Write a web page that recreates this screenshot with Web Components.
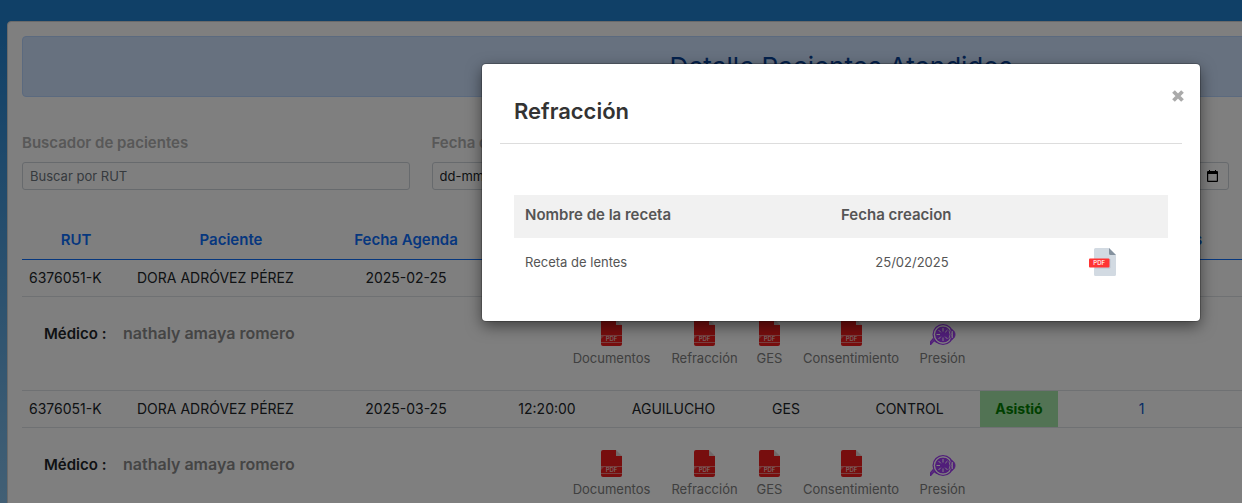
<!DOCTYPE html>
<html lang="es">
<head>
<meta charset="utf-8">
<title>Detalle Pacientes Atendidos</title>
<style>
/* Scrolling is locked while the modal is open. */
body { margin: 0; height: 100vh; overflow: hidden; font-family: Inter, "Noto Sans", sans-serif; font-size: 14px; line-height: 22px; color: #212529; }
</style>
</head>
<body>
<clinic-page>
  <page-banner>Detalle Pacientes Atendidos</page-banner>
  <filter-bar>
    <filter-field label="Buscador de pacientes" placeholder="Buscar por RUT"></filter-field>
    <filter-field label="Fecha desde" placeholder="dd-mm-aaaa" date></filter-field>
    <filter-field label="Fecha hasta" placeholder="dd-mm-aaaa" date></filter-field>
  </filter-bar>
  <agenda-table></agenda-table>
  <modal-window slot="overlay" heading="Refracción">
    <recipe-table></recipe-table>
  </modal-window>
</clinic-page>

<script>
class BaseElement extends HTMLElement {
  connectedCallback() {
    if (this.shadowRoot) return;
    this.attachShadow({ mode: 'open' }).innerHTML =
      '<style>*{box-sizing:border-box}' + this.css() + '</style>' + this.html();
  }
  attr(name) { return this.getAttribute(name) || ''; }
}

/* Page: blue gradient, white card, and the overlay above both. The card is wider than the window. */
customElements.define('clinic-page', class extends BaseElement {
  css() { return `
    :host { display: block; position: relative; width: calc(100% + 440px); min-height: 100vh; padding: 21px 7px; box-sizing: border-box;
      background: linear-gradient(#2080ce 0, #2080ce 20px, #8cc4ec 540px); }
    main { background: #fff; border: 1px solid #d4d4d4; border-radius: 4px; padding: 14px; }`; }
  html() { return '<main><slot></slot></main><slot name="overlay"></slot>'; }
});

customElements.define('page-banner', class extends BaseElement {
  css() { return `
    :host { display: block; }
    h1 { margin: 0; padding: 14px; border: 1px solid #b6d4fe; border-radius: 4px; background: #cfe2ff; color: #084298;
      font-size: 26px; line-height: 31px; font-weight: 400; text-align: center; }`; }
  html() { return '<h1><slot></slot></h1>'; }
});

customElements.define('filter-bar', class extends BaseElement {
  css() { return ':host { display: grid; grid-template-columns: repeat(4, 1fr); margin: 35px 0 32px; }'; }
  html() { return '<slot></slot>'; }
});

customElements.define('filter-field', class extends BaseElement {
  css() { return `
    :host { display: block; padding-right: 22px; }
    label { display: block; margin-bottom: 8px; font-size: 15px; font-weight: 600; color: #b0b0b0; }
    .box { display: flex; align-items: center; height: 28px; padding: 0 10px 0 7px; border: 1px solid #ced4da; border-radius: 3px; background: #fff; }
    input { flex: 1; min-width: 0; padding: 0; border: 0; background: none; font: inherit; font-size: 13px; outline: 0; }
    input::placeholder { color: #6c757d; opacity: 1; }
    :host([date]) input::placeholder { color: #212529; }
    svg { flex: none; }`; }
  html() {
    const icon = this.hasAttribute('date')
      ? '<svg width="11" height="12" viewBox="0 0 11 12" aria-hidden="true"><path d="M2 0h1v1h5V0h1v1h1a1 1 0 0 1 1 1v9a1 1 0 0 1-1 1H1a1 1 0 0 1-1-1V2a1 1 0 0 1 1-1h1zM1.200 4v6.800h8.600V4z" fill="#000" fill-rule="evenodd"/></svg>' : '';
    return `<label for="f">${this.attr('label')}</label><div class="box"><input id="f" type="text" placeholder="${this.attr('placeholder')}">${icon}</div>`;
  }
});

/* One document shortcut of a visit: icon over caption. */
customElements.define('doc-action', class extends BaseElement {
  css() { return `
    :host { display: block; }
    a { display: flex; flex-direction: column; align-items: center; color: #808080; font-size: 13px; line-height: 20px; text-decoration: none; white-space: nowrap; }
    svg { display: block; margin-bottom: 2px; }
    svg text { font: 500 6px Inter, sans-serif; }`; }
  html() {
    const pdf = `<svg width="21" height="27" viewBox="0 0 21 27" aria-hidden="true">
      <path d="M2 0H15V6H21V25a2 2 0 0 1-2 2H2a2 2 0 0 1-2-2V2A2 2 0 0 1 2 0Z" fill="#ee1c1c"/>
      <path d="M15 0l6 6h-6z" fill="#e4d4d4"/><path d="M0 16.500H21M0 23.500H21" stroke="#f29a9a" stroke-width=".8"/>
      <path d="M0 17h3L0 20z" fill="#f06a6a"/><text x="10.500" y="22.200" text-anchor="middle" fill="#f4dede">PDF</text></svg>`;
    const eye = `<svg width="26" height="27" viewBox="0 0 26 27" aria-hidden="true">
      <circle cx="13" cy="15.500" r="8" fill="#a33df5"/>
      <g fill="none" stroke="#a33df5"><circle cx="13" cy="15.500" r="9.900" stroke-width="1.300"/>
      <path d="M20.500 10c3.500 1 4.500 3.500 4.500 5.500s-1 4.500-4.500 5.500z" fill="#a33df5" stroke-width="1"/>
      <path d="M3.500 19.500L.5 23v3M7 23.500l-3-2-3.500 4" stroke-width="1.500"/></g>
      <g fill="none" stroke="#fff" stroke-width="1"><circle cx="13" cy="15.500" r="8.700" stroke-width=".6"/>
      <path d="M13 9v3.500M13 18.500V22M6.500 15.500H10M8.500 11l2.300 2.300M8.500 20l2.300-2.300M17.500 11l-2.300 2.300M17.500 20l-2.300-2.300"/>
      <path d="M19 11.500q2 4 0 8M22.500 12v7" stroke-width=".8"/></g></svg>`;
    return `<a href="#">${this.hasAttribute('eye') ? eye : pdf}<slot></slot></a>`;
  }
});

customElements.define('visit-detail', class extends BaseElement {
  css() { return `
    :host { display: flex; height: 93px; padding: 22px 22px 0; font-weight: 600; box-sizing: border-box; }
    .doctor { display: flex; align-items: baseline; align-self: flex-start; gap: 18px; width: 527px; padding-top: 3px; }
    .doctor b { font-size: 15px; font-weight: 600; color: #212529; width: 61px; white-space: nowrap; }
    .doctor span { font-size: 16px; color: #8a8a8a; }
    .docs { display: grid; grid-template-columns: 81px 67px 25px 100px 45px; gap: 19px; font-weight: 400; }`; }
  html() { return `<div class="doctor"><b>Médico :</b><span>${this.attr('doctor')}</span></div>
    <div class="docs"><doc-action>Documentos</doc-action><doc-action>Refracción</doc-action><doc-action>GES</doc-action>
    <doc-action>Consentimiento</doc-action><doc-action eye>Presión</doc-action></div>`; }
});

customElements.define('agenda-table', class extends BaseElement {
  css() { return `
    :host { display: block; }
    table { width: 100%; table-layout: fixed; border-collapse: separate; border-spacing: 0; }
    th, td { height: 37px; padding: 0 7px 1px; border-bottom: 1px solid #dee2e6; text-align: center; white-space: nowrap; }
    th { height: 38px; border-color: #0d6efd; color: #0d6efd; font-size: 15px; font-weight: 600; }
    .left { text-align: left; }
    .ok { background: #a4e6a8; color: #008000; font-weight: 700; }
    .detail { height: 94px; padding: 0; }
    a { color: #0a58ca; text-decoration: none; }`; }
  html() {
    const widths = [108, 202, 148, 134, 119, 106, 141, 78, 167];
    const heads = ['RUT', 'Paciente', 'Fecha Agenda', 'Hora', 'Sucursal', 'Previsión', 'Tipo', 'Estado', 'Total Atenciones', ''];
    const row = (date, time, place, plan, kind) => `<tr><td class="left">6376051-K</td><td class="left">DORA ADRÓVEZ PÉREZ</td><td>${date}</td><td>${time}</td>
      <td>${place}</td><td>${plan}</td><td>${kind}</td><td class="ok">Asistió</td><td><a href="#">1</a></td><td></td></tr>
      <tr><td class="detail" colspan="10"><visit-detail doctor="nathaly amaya romero"></visit-detail></td></tr>`;
    return `<table><colgroup>${widths.map(w => `<col style="width:${w}px">`).join('')}<col></colgroup>
      <thead><tr>${heads.map(h => `<th scope="col">${h}</th>`).join('')}</tr></thead>
      <tbody>${row('2025-02-25', '', 'AGUILUCHO', 'GES', '')}${row('2025-03-25', '12:20:00', 'AGUILUCHO', 'GES', 'CONTROL')}</tbody></table>`;
  }
});

customElements.define('modal-window', class extends BaseElement {
  css() { return `
    :host { position: absolute; inset: 0; display: flex; justify-content: center; align-items: flex-start; padding-top: 64px; background: rgba(0,0,0,.5); box-sizing: border-box; }
    section { width: 718px; padding: 0 18px 35px; background: #fff; border-radius: 4px; box-shadow: 0 0 0 1px rgba(0,0,0,.2), 0 5px 15px rgba(0,0,0,.5); }
    header { display: flex; justify-content: space-between; align-items: flex-start; height: 80px; padding-left: 14px; border-bottom: 1px solid #ddd; }
    h2 { margin: 32px 0 0; font-size: 22px; line-height: 30px; font-weight: 600; color: #333; }
    button { margin: 26px -2px 0 0; padding: 0; border: 0; background: none; line-height: 0; cursor: pointer; }
    .body { padding: 51px 14px 0; }`; }
  html() { return `<section role="dialog" aria-modal="true" aria-labelledby="t"><header><h2 id="t">${this.attr('heading')}</h2>
    <button type="button" aria-label="Cerrar"><svg width="12" height="12" viewBox="0 0 12 12"><path d="M1.500 1.500l9 9m0-9l-9 9" stroke="#aaa" stroke-width="3.800"/></svg></button></header>
    <div class="body"><slot></slot></div></section>`; }
});

customElements.define('recipe-table', class extends BaseElement {
  css() { return `
    :host { display: block; color: #555; }
    table { width: 100%; table-layout: fixed; border-collapse: collapse; }
    col:nth-child(1) { width: 316px; } col:nth-child(2) { width: 164px; }
    th { height: 43px; padding: 0 11px 4px; background: #f1f1f1; text-align: left; font-size: 15px; font-weight: 600; white-space: nowrap; }
    td { height: 48px; padding: 0 11px; font-size: 13px; }
    td:nth-child(2) { text-align: center; }
    td:nth-child(3) { padding-left: 95px; }
    a { display: block; width: 28px; }
    svg { display: block; }
    text { font: 500 6px Inter, sans-serif; }`; }
  html() { return `<table><colgroup><col><col><col></colgroup>
    <thead><tr><th scope="col">Nombre de la receta</th><th scope="col">Fecha creacion</th><th></th></tr></thead>
    <tbody><tr><td>Receta de lentes</td><td>25/02/2025</td><td><a href="#" aria-label="Abrir PDF">
    <svg width="28" height="28" viewBox="0 0 28 28"><path d="M6.500 0H20l7 7v19.500A1.500 1.500 0 0 1 25.500 28h-19A1.500 1.500 0 0 1 5 26.500v-25A1.500 1.500 0 0 1 6.500 0z" fill="#d2dae2"/>
    <path d="M20 0l7 7h-5.500A1.500 1.500 0 0 1 20 5.500z" fill="#84919e"/><path d="M21 11v9H6" fill="none" stroke="#b9c4cf"/>
    <rect y="10.500" width="20.500" height="9" rx="1" fill="#ff3333"/><text x="10.200" y="17.200" text-anchor="middle" fill="#fff">PDF</text></svg></a></td></tr></tbody></table>`; }
});
</script>
</body>
</html>
